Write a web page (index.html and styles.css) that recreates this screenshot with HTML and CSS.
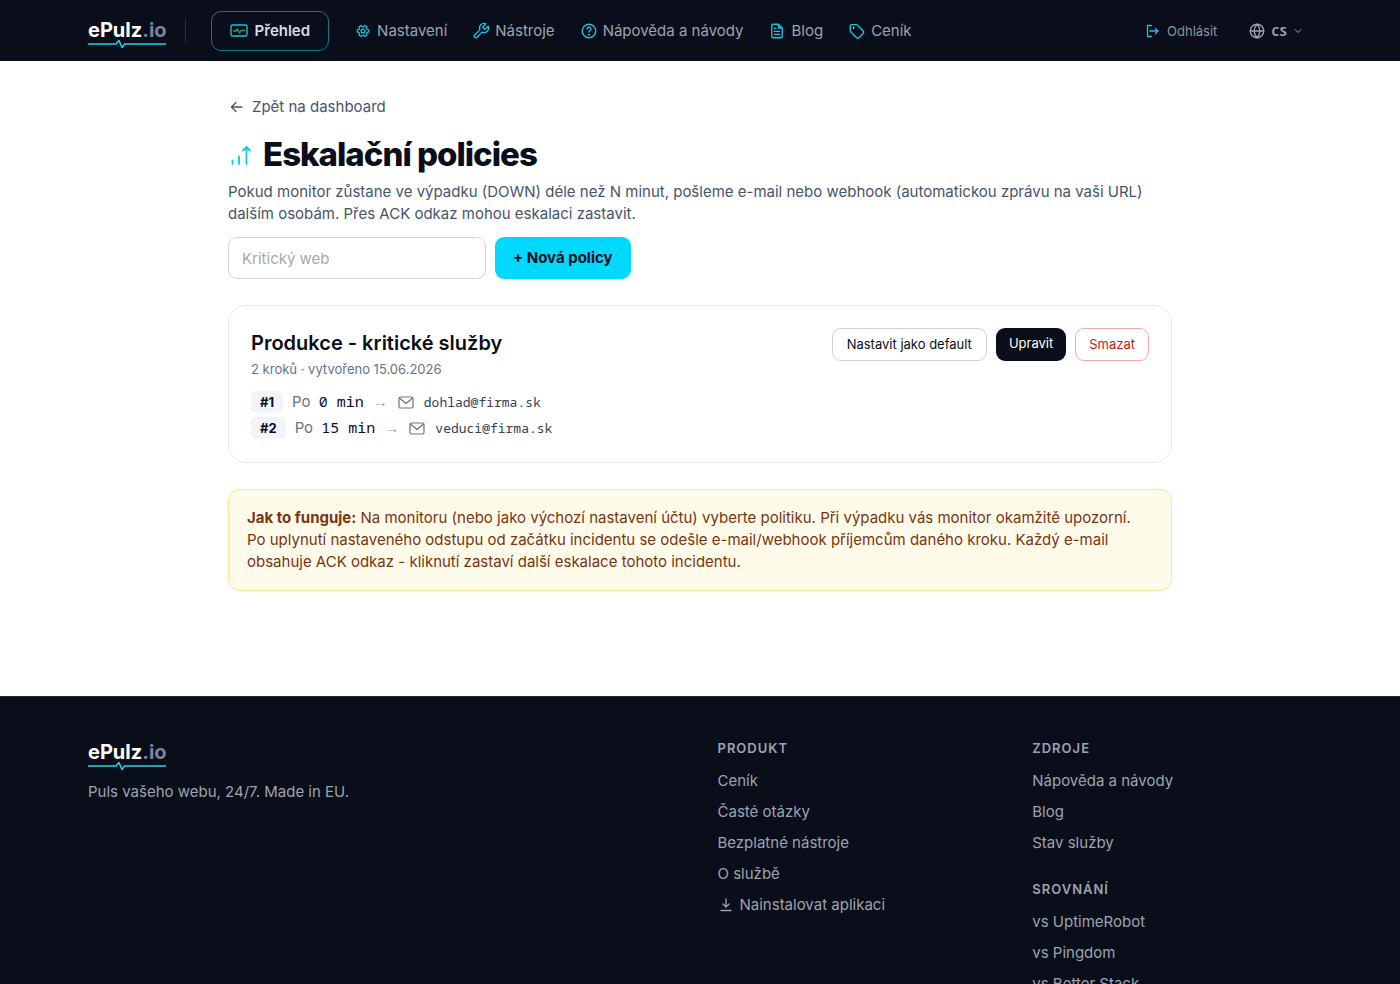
FILE: index.html
```html
<!DOCTYPE html>
<html lang="cs">
<head>
  <meta charset="UTF-8" />
  <meta name="viewport" content="width=device-width, initial-scale=1" />
  <title>Eskalační policies – ePulz.io</title>
  <link rel="stylesheet" href="styles.css">
</head>
<body>

  <header class="site-header">
    <div class="container header-row">
      <a href="#" class="logo">
        <span>ePulz<span class="logo-tld">.io</span></span>
        <svg class="logo-pulse" viewBox="0 0 78 10" width="78" height="10"><path d="M0 4H28L31 .5L34 7.500L36.500 4H78"/></svg>
      </a>
      <nav class="main-nav">
        <a href="#" class="active">
          <svg class="icon" viewBox="0 0 18 18"><rect x="1" y="3" width="16" height="11" rx="1.500"/><path class="green" d="M3.500 9H6l1.500-2 2 4L11 8.500h3.500"/></svg>
          Přehled
        </a>
        <a href="#">
          <svg class="icon" viewBox="0 0 18 18"><path d="M12.900 7.300L14.700 7.800V10.200L12.900 10.700L12.500 11.500L12.900 13.300L10.800 14.500L9.500 13.300H8.500L7.200 14.500L5.100 13.300L5.500 11.500L5.100 10.700L3.300 10.200V7.800L5.100 7.300L5.500 6.500L5.100 4.700L7.200 3.500L8.500 4.700H9.500L10.800 3.500L12.900 4.700L12.500 6.500z"/><circle cx="9" cy="9" r="1.900"/></svg>
          Nastavení
        </a>
        <a href="#">
          <svg class="icon icon-24" viewBox="0 0 24 24"><path d="M14.700 6.300a1 1 0 0 0 0 1.400l1.600 1.600a1 1 0 0 0 1.400 0l3.770-3.770a6 6 0 0 1-7.940 7.940l-6.910 6.910a2.120 2.120 0 0 1-3-3l6.910-6.910a6 6 0 0 1 7.940-7.940z"/></svg>
          Nástroje
        </a>
        <a href="#">
          <svg class="icon icon-24" viewBox="0 0 24 24"><circle cx="12" cy="12" r="9"/><path d="M9.500 9.500a2.500 2.500 0 1 1 3.600 2.200c-.8.4-1.100.9-1.100 1.700"/><path class="light" d="M12 16.800v.2"/></svg>
          Nápověda a návody
        </a>
        <a href="#">
          <svg class="icon icon-24" viewBox="0 0 24 24"><path d="M14 3H7a2 2 0 0 0-2 2v14a2 2 0 0 0 2 2h10a2 2 0 0 0 2-2V8zM14 3v5h5M8.500 12.500h7M8.500 16.500h7M8.500 8.500h2"/></svg>
          Blog
        </a>
        <a href="#">
          <svg class="icon icon-24" viewBox="0 0 24 24"><path d="M3 5v6.500a2 2 0 0 0 .6 1.400l8 8a2 2 0 0 0 2.800 0l6-6a2 2 0 0 0 0-2.800l-8-8a2 2 0 0 0-1.400-.6H5a2 2 0 0 0-2 2z"/><path class="light" d="M7.500 7.800v.2"/></svg>
          Ceník
        </a>
      </nav>
      <div class="user-nav">
        <a href="#" class="logout">
          <svg class="icon" viewBox="0 0 18 18"><path d="M7.500 3.500h-4v11h4M6 9h8M11.500 6.500L14 9l-2.500 2.500"/></svg>
          Odhlásit
        </a>
        <button type="button" class="lang">
          <svg class="icon icon-24" viewBox="0 0 24 24"><circle cx="12" cy="12" r="9"/><path d="M3 12h18M12 3c-5 5-5 13 0 18M12 3c5 5 5 13 0 18"/></svg>
          CS
          <svg class="chevron" viewBox="0 0 12 12"><path d="M3 4.500L6 7.500l3-3"/></svg>
        </button>
      </div>
    </div>
  </header>

  <main class="content">
    <a href="#" class="back">
      <svg class="icon" viewBox="0 0 18 18"><path d="M14 9H3.500M8 4.500L3.500 9L8 13.500"/></svg>
      Zpět na dashboard
    </a>

    <h1>
      <svg class="title-icon" viewBox="0 0 26 26"><path d="M4.500 23v-3.500M11 23v-7.500M18.500 23V6M15 9.500L18.500 6L22 9.500"/></svg>
      Eskalační policies
    </h1>
    <p class="lead">Pokud monitor zůstane ve výpadku (DOWN) déle než N minut, pošleme e-mail nebo webhook (automatickou zprávu na vaši URL) dalším osobám. Přes ACK odkaz mohou eskalaci zastavit.</p>

    <form class="new-policy">
      <input type="text" placeholder="Kritický web" aria-label="Název policy">
      <button type="submit">+ Nová policy</button>
    </form>

    <section class="policy">
      <div class="policy-head">
        <div>
          <h2>Produkce - kritické služby</h2>
          <p class="meta">2 kroků · vytvořeno 15.06.2026</p>
        </div>
        <div class="actions">
          <button type="button" class="btn">Nastavit jako default</button>
          <a href="#" class="btn btn-dark">Upravit</a>
          <button type="button" class="btn btn-danger">Smazat</button>
        </div>
      </div>
      <ol class="steps">
        <li>
          <span class="badge">#1</span>
          <span class="after">Po <strong>0 min</strong></span>
          <span class="arrow">→</span>
          <svg class="icon" viewBox="0 0 18 18"><rect x="2" y="4" width="14" height="11" rx="1.500"/><path d="M2.500 5L9 10.500 15.500 5"/></svg>
          <span class="mail">dohlad@firma.sk</span>
        </li>
        <li>
          <span class="badge">#2</span>
          <span class="after">Po <strong>15 min</strong></span>
          <span class="arrow">→</span>
          <svg class="icon" viewBox="0 0 18 18"><rect x="2" y="4" width="14" height="11" rx="1.500"/><path d="M2.500 5L9 10.500 15.500 5"/></svg>
          <span class="mail">veduci@firma.sk</span>
        </li>
      </ol>
    </section>

    <div class="notice">
      <strong>Jak to funguje:</strong> Na monitoru (nebo jako výchozí nastavení účtu) vyberte politiku. Při výpadku vás monitor okamžitě upozorní. Po uplynutí nastaveného odstupu od začátku incidentu se odešle e-mail/webhook příjemcům daného kroku. Každý e-mail obsahuje ACK odkaz - kliknutí zastaví další eskalace tohoto incidentu.
    </div>
  </main>

  <footer class="site-footer">
    <div class="container footer-grid">
      <div class="footer-brand">
        <a href="#" class="logo">
          <span>ePulz<span class="logo-tld">.io</span></span>
          <svg class="logo-pulse" viewBox="0 0 78 10" width="78" height="10"><path d="M0 4H28L31 .5L34 7.500L36.500 4H78"/></svg>
        </a>
        <p>Puls vašeho webu, 24/7. Made in EU.</p>
      </div>
      <div>
        <h3>Produkt</h3>
        <ul>
          <li><a href="#">Ceník</a></li>
          <li><a href="#">Časté otázky</a></li>
          <li><a href="#">Bezplatné nástroje</a></li>
          <li><a href="#">O službě</a></li>
          <li>
            <a href="#" class="install">
              <svg class="icon" viewBox="0 0 18 18"><path d="M8 3v8M5 8l3 3 3-3M3 14.500h10"/></svg>
              Nainstalovat aplikaci
            </a>
          </li>
        </ul>
      </div>
      <div>
        <h3>Zdroje</h3>
        <ul>
          <li><a href="#">Nápověda a návody</a></li>
          <li><a href="#">Blog</a></li>
          <li><a href="#">Stav služby</a></li>
        </ul>
        <h3>Srovnání</h3>
        <ul>
          <li><a href="#">vs UptimeRobot</a></li>
          <li><a href="#">vs Pingdom</a></li>
          <li><a href="#">vs Better Stack</a></li>
        </ul>
      </div>
    </div>
  </footer>

</body>
</html>
```
FILE: styles.css
```css
* {
  box-sizing: border-box;
}

body {
  margin: 0;
  font-family: 'Inter', sans-serif;
  font-size: 15px;
  line-height: 22px;
  color: #0a0e1a;
  background: #fff;
}

a {
  color: inherit;
  text-decoration: none;
}

button, input {
  font: inherit;
}

button {
  cursor: pointer;
}

h1, h2, h3, p, ul, ol {
  margin: 0;
  padding: 0;
}

ul, ol {
  list-style: none;
}

svg {
  flex: none;
  fill: none;
  stroke: currentColor;
  stroke-linecap: round;
  stroke-linejoin: round;
}

.icon {
  width: 18px;
  height: 18px;
  stroke-width: 1.3;
}

.icon-24 {
  stroke-width: 1.8;
}

.container {
  max-width: 1400px;
  margin: 0 auto;
  padding: 0 88px;
}

/* Header */
.site-header {
  background: #0a0e1a;
  color: #94a3b8;
}

.header-row {
  display: flex;
  align-items: center;
  height: 61px;
}

.logo {
  display: inline-flex;
  flex-direction: column;
  font-size: 20px;
  font-weight: 700;
  line-height: 20px;
  color: #fff;
}

.logo-tld {
  color: #7c849c;
}

.logo-pulse {
  stroke: #22d3ee;
  stroke-width: 1.5;
}

.header-row .logo {
  padding-top: 8px;
}

.main-nav {
  display: flex;
  align-items: center;
  gap: 25px;
  margin-left: 18px;
}

.main-nav::before {
  content: "";
  width: 1px;
  height: 24px;
  background: #2a3040;
}

.main-nav a {
  display: flex;
  align-items: center;
  gap: 5px;
  color: #9ca3af;
}

.main-nav .icon,
.logout .icon {
  color: #16c5df;
}

.main-nav .active {
  gap: 7px;
  padding: 8px 18px;
  border: 1px solid #15778a;
  border-radius: 10px;
  font-weight: 600;
  color: #d8dce6;
}

.green {
  stroke: #22a565;
}

.light {
  stroke: #e0f7fa;
  stroke-width: 2;
}

.user-nav {
  display: flex;
  align-items: center;
  gap: 31px;
  margin-left: auto;
  padding-right: 8px;
  font-size: 13px;
  line-height: 20px;
}

.logout {
  display: flex;
  align-items: center;
  gap: 5px;
  color: #8b93a3;
}

.lang {
  display: flex;
  align-items: center;
  gap: 5px;
  padding: 0;
  border: 0;
  background: none;
  font-family: 'Noto Sans Mono', 'Noto Sans', sans-serif;
  font-weight: 700;
  color: #9ca3af;
}

.chevron {
  width: 12px;
  height: 12px;
}

/* Content */
.content {
  max-width: 944px;
  margin: 0 auto;
  padding: 35px 0 105px;
}

.back {
  display: inline-flex;
  align-items: center;
  gap: 6px;
  color: #475569;
}

h1 {
  display: flex;
  align-items: center;
  gap: 9px;
  margin-top: 12px;
  font-size: 33px;
  font-weight: 800;
  line-height: 40px;
  letter-spacing: -1px;
}

.title-icon {
  width: 26px;
  height: 26px;
  stroke: #14c8e0;
  stroke-width: 1.8;
}

.lead {
  margin-top: 7px;
  color: #475569;
}

.new-policy {
  display: flex;
  gap: 9px;
  margin-top: 12px;
}

.new-policy input {
  width: 258px;
  height: 42px;
  padding: 0 13px;
  border: 1px solid #d1d5db;
  border-radius: 9px;
}

.new-policy input::placeholder {
  color: #a3a8b2;
}

.new-policy button {
  padding: 0 18px;
  border: 0;
  border-radius: 9px;
  background: #00d9ff;
  font-weight: 700;
  color: #0a0e1a;
}

.policy {
  margin-top: 26px;
  padding: 22px 22px 23px;
  border: 1px solid #e5e7eb;
  border-radius: 18px;
}

.policy-head {
  display: flex;
  justify-content: space-between;
  align-items: flex-start;
}

h2 {
  font-size: 20px;
  font-weight: 600;
  line-height: 30px;
}

.meta {
  margin-top: 2px;
  font-size: 13px;
  line-height: 18px;
  color: #64748b;
}

.actions {
  display: flex;
  gap: 9px;
}

.btn {
  padding: 6px 14px;
  border: 1px solid #cbd0dd;
  border-radius: 9px;
  background: #fff;
  font-size: 13px;
  line-height: 19px;
  color: #0a0e1a;
}

.btn-dark {
  padding: 6px 13px;
  border: 0;
  background: #0a0e1a;
  color: #fff;
}

.btn-danger {
  padding: 6px 13px;
  border-color: #fca5a5;
  color: #b91c1c;
}

.steps {
  display: flex;
  flex-direction: column;
  gap: 4px;
  margin-top: 13px;
}

.steps li {
  display: flex;
  align-items: center;
  gap: 9px;
  height: 22px;
}

.badge {
  padding: 2px 9px;
  border-radius: 5px;
  background: #f1f5f9;
  font-size: 13px;
  font-weight: 700;
  line-height: 18px;
}

.after,
.steps .icon {
  color: #64748b;
}

.steps .icon {
  stroke-width: 1.2;
}

.after strong {
  margin-left: 4px;
  font-family: 'Noto Sans Mono', 'DejaVu Sans Mono', monospace;
  font-weight: 400;
  line-height: 20px;
  color: #0a0e1a;
}

.arrow {
  font-family: 'Liberation Sans', sans-serif;
  font-size: 15px;
  color: #94a3b8;
}

.mail {
  font-family: 'Noto Sans Mono', 'DejaVu Sans Mono', monospace;
  font-size: 13px;
  color: #334155;
}

.notice {
  margin-top: 26px;
  padding: 17px 18px;
  border: 1px solid #fde68a;
  border-radius: 12px;
  background: #fffbeb;
  color: #78350f;
}

/* Footer */
.site-footer {
  padding: 42px 0;
  border-top: 1px solid #1f2937;
  background: #0a0e1a;
  color: #9ca3af;
}

.footer-grid {
  display: grid;
  grid-template-columns: repeat(4, 1fr);
  gap: 35px;
}

.footer-brand {
  grid-column: span 2;
  padding-top: 3px;
}

.footer-brand p {
  margin-top: 9px;
}

h3 {
  font-size: 13px;
  font-weight: 600;
  line-height: 18px;
  letter-spacing: 1px;
  text-transform: uppercase;
}

.site-footer ul {
  display: flex;
  flex-direction: column;
  gap: 9px;
  margin: 13px 0 26px;
}

.install {
  display: flex;
  align-items: center;
  gap: 4px;
}
```
